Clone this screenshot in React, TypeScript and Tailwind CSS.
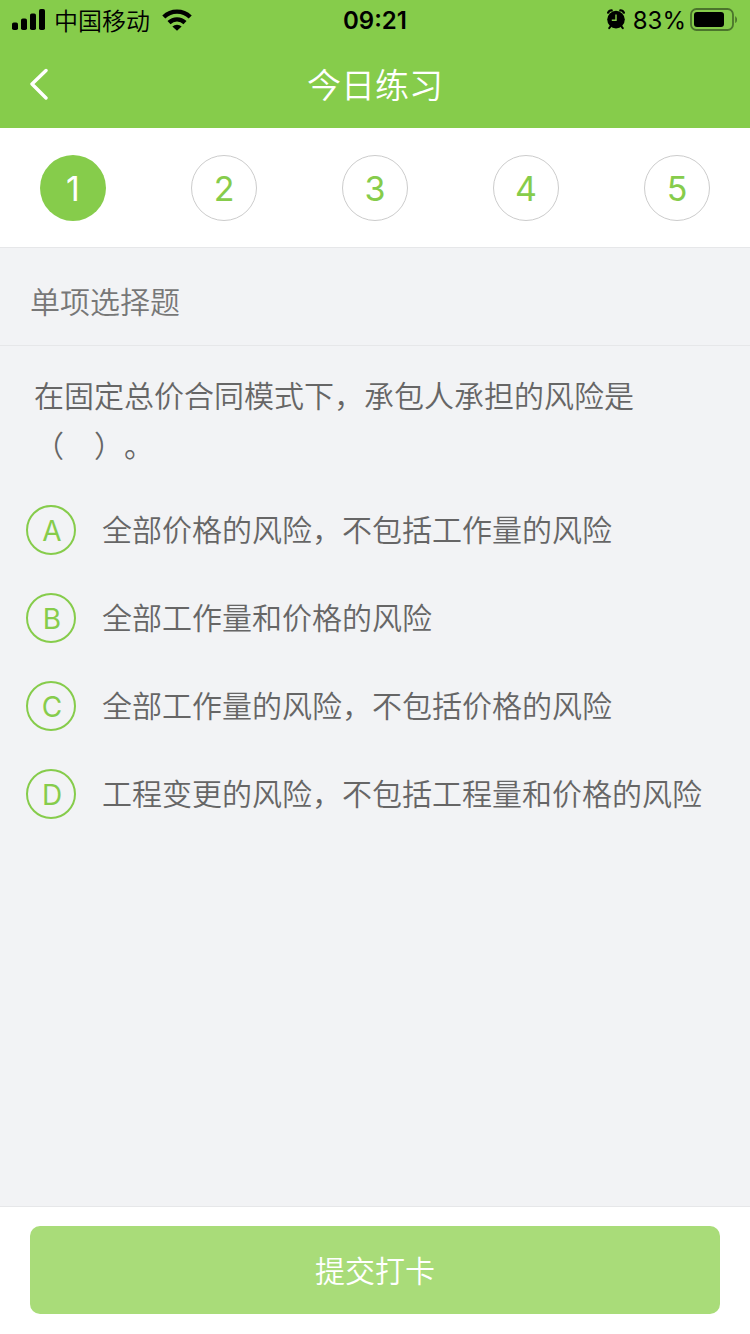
import { useState } from 'react'

const QUESTIONS = [1, 2, 3, 4, 5]

const OPTIONS = [
  { key: 'A', text: '全部价格的风险，不包括工作量的风险' },
  { key: 'B', text: '全部工作量和价格的风险' },
  { key: 'C', text: '全部工作量的风险，不包括价格的风险' },
  { key: 'D', text: '工程变更的风险，不包括工程量和价格的风险' },
]

function SignalIcon() {
  return (
    <svg width="34" height="22" viewBox="0 0 34 22" aria-hidden="true">
      <rect x="0" y="13.5" width="6" height="7.5" rx="1.8" />
      <rect x="9" y="9.5" width="6" height="11.5" rx="1.8" />
      <rect x="18" y="4.5" width="6" height="16.5" rx="1.8" />
      <rect x="27" y="0" width="6" height="21" rx="1.8" />
    </svg>
  )
}

function WifiIcon() {
  return (
    <svg width="30" height="22" viewBox="0 0 30 22" aria-hidden="true">
      <path d="M15 21.8 10.4 17.6a6.6 6.6 0 0 1 9.2 0Z" />
      <g fill="none" stroke="currentColor" strokeWidth="4.4">
        <path d="M7 13.6a11.6 11.6 0 0 1 16 0" />
        <path d="M1.8 8a19 19 0 0 1 26.4 0" />
      </g>
    </svg>
  )
}

function AlarmIcon() {
  return (
    <svg width="18" height="22" viewBox="0 0 18 22" aria-hidden="true">
      <g fill="none" stroke="currentColor" strokeLinecap="round">
        <path d="M1.2 3.6a3.6 3.6 0 0 1 3.4-2.2M16.8 3.6a3.6 3.6 0 0 0-3.4-2.2" strokeWidth="2.4" />
        <path d="m3.8 17.2-1.6 2M14.2 17.2l1.6 2" strokeWidth="2" />
      </g>
      <circle cx="9" cy="10.6" r="8.8" />
      <path d="M9 5.4v5.8H4.8" fill="none" stroke="#86cc4b" strokeWidth="1.4" />
    </svg>
  )
}

function BatteryIcon() {
  return (
    <svg width="48" height="24" viewBox="0 0 48 24" aria-hidden="true">
      <rect x="1" y="1" width="42" height="21" rx="5.5" fill="none" stroke="#4b742c" strokeWidth="1.8" />
      <rect x="4" y="4" width="30" height="15" rx="3" />
      <path d="M45.2 8.2c2.4 1.2 2.4 5.6 0 6.8Z" fill="#4b742c" />
    </svg>
  )
}

function StatusBar() {
  return (
    <div className="grid h-10 grid-cols-3 items-center px-3 font-['Inter','Noto_Sans_CJK_SC',sans-serif] text-2xl font-normal text-black">
      <div className="flex items-center gap-2">
        <SignalIcon />
        <span className="mr-1 font-['Noto_Sans_CJK_SC',sans-serif] font-[350]">中国移动</span>
        <WifiIcon />
      </div>
      <span className="pt-0.5 text-center font-semibold">09:21</span>
      <div className="flex items-center justify-end">
        <AlarmIcon />
        <span className="mr-1 ml-2 pt-0.5">83%</span>
        <BatteryIcon />
      </div>
    </div>
  )
}

export default function App() {
  const [current, setCurrent] = useState(1)
  const [answer, setAnswer] = useState('')

  return (
    <div className="flex min-h-screen flex-col bg-[#f2f3f5] font-['Noto_Sans_CJK_SC',sans-serif] font-[350] text-[#666]" lang="zh-CN">
      <header className="bg-[#86cc4b]">
        <StatusBar />
        <div className="grid h-22 grid-cols-[80px_1fr_80px] items-center text-white">
          <button type="button" aria-label="返回" className="pl-7">
            <svg width="22" height="32" viewBox="0 0 22 32" fill="none" stroke="currentColor" strokeWidth="3.4" strokeLinecap="round" strokeLinejoin="round">
              <path d="M18 2.5 4 16l14 14" />
            </svg>
          </button>
          <h1 className="pb-0.5 text-center text-[34px] font-[350]">今日练习</h1>
        </div>
      </header>

      <nav className="flex h-30 items-center justify-between border-b border-[#e6e7e9] bg-white px-10">
        {QUESTIONS.map((n) => (
          <button
            key={n}
            type="button"
            onClick={() => setCurrent(n)}
            className={
              n === current
                ? "size-[66px] rounded-full bg-[#86cc4b] pt-0.5 font-['Inter',sans-serif] text-[34px] font-normal text-white"
                : "size-[66px] rounded-full border border-[#ccc] pt-0.5 font-['Inter',sans-serif] text-[34px] font-normal text-[#86cc4b]"
            }
          >
            {n}
          </button>
        ))}
      </nav>

      <h2 className="border-b border-[#e6e7e9] px-[30px] pt-7 pb-5 text-[30px] leading-[49px] font-[350] text-[#777]">
        单项选择题
      </h2>

      <main className="flex-1 pt-[23px]">
        <p className="px-[34px] text-[30px] leading-[50px] [text-spacing-trim:space-all]">
          在固定总价合同模式下，承包人承担的风险是
          <br />
          （　）。
        </p>
        <div role="radiogroup" aria-label="选项" className="mt-9 flex flex-col gap-[38px] px-[26px]">
          {OPTIONS.map((o) => (
            <label key={o.key} className="flex items-start gap-[26px] text-[30px]">
              <span className="grid size-[50px] shrink-0 place-items-center">
                <input
                  type="radio"
                  name="answer"
                  value={o.key}
                  checked={answer === o.key}
                  onChange={() => setAnswer(o.key)}
                  className="peer col-start-1 row-start-1 size-[50px] appearance-none rounded-full border-2 border-[#86cc4b] checked:bg-[#86cc4b]"
                />
                <span className="col-start-1 row-start-1 pt-0.5 pl-0.5 font-['Inter',sans-serif] text-[28px] font-normal text-[#86cc4b] peer-checked:text-white">
                  {o.key}
                </span>
              </span>
              <span className="leading-[46px]">{o.text}</span>
            </label>
          ))}
        </div>
      </main>

      <footer className="border-t border-[#e6e7e9] bg-white px-[30px] pt-[19px] pb-5">
        <button type="button" className="h-22 w-full rounded-[10px] bg-[#a9dc79] pb-0.5 text-[30px] font-[350] text-white">
          提交打卡
        </button>
      </footer>
    </div>
  )
}
